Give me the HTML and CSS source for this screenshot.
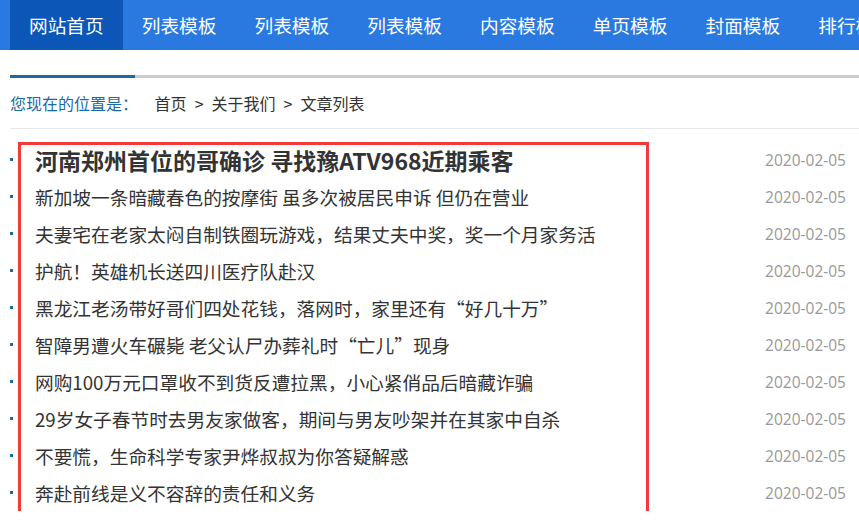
FILE: index.html
```html
<!DOCTYPE html>
<html lang="zh-CN">
<head>
    <meta charset="UTF-8">
    <meta name="viewport" content="width=device-width, initial-scale=1.0">
    <title>文章列表</title>
    <link rel="stylesheet" href="styles.css">
</head>
<body>

    <div class="nav">
        <a href="#" class="active">网站首页</a>
        <a href="#">列表模板</a>
        <a href="#">列表模板</a>
        <a href="#">列表模板</a>
        <a href="#">内容模板</a>
        <a href="#">单页模板</a>
        <a href="#">封面模板</a>
        <a href="#">排行模板</a>
    </div>

    <div class="main">
        <div class="title-bar"><span></span></div>

        <div class="place">
            <span class="place-label">您现在的位置是：</span>
            <a href="#">首页</a><span class="sep">&gt;</span><a href="#">关于我们</a><span class="sep">&gt;</span><a href="#">文章列表</a>
        </div>

        <div class="news-wrap">
            <ul class="news-list">
                <li class="top"><a href="#">河南郑州首位的哥确诊 寻找豫ATV968近期乘客</a><span class="date">2020-02-05</span></li>
                <li><a href="#">新加坡一条暗藏春色的按摩街 虽多次被居民申诉 但仍在营业</a><span class="date">2020-02-05</span></li>
                <li><a href="#">夫妻宅在老家太闷自制铁圈玩游戏，结果丈夫中奖，奖一个月家务活</a><span class="date">2020-02-05</span></li>
                <li><a href="#">护航！英雄机长送四川医疗队赴汉</a><span class="date">2020-02-05</span></li>
                <li><a href="#">黑龙江老汤带好哥们四处花钱，落网时，家里还有“好几十万”</a><span class="date">2020-02-05</span></li>
                <li><a href="#">智障男遭火车碾毙 老父认尸办葬礼时“亡儿”现身</a><span class="date">2020-02-05</span></li>
                <li><a href="#">网购100万元口罩收不到货反遭拉黑，小心紧俏品后暗藏诈骗</a><span class="date">2020-02-05</span></li>
                <li><a href="#">29岁女子春节时去男友家做客，期间与男友吵架并在其家中自杀</a><span class="date">2020-02-05</span></li>
                <li><a href="#">不要慌，生命科学专家尹烨叔叔为你答疑解惑</a><span class="date">2020-02-05</span></li>
                <li><a href="#">奔赴前线是义不容辞的责任和义务</a><span class="date">2020-02-05</span></li>
            </ul>
            <div class="mark"></div>
        </div>
    </div>

</body>
</html>
```

FILE: styles.css
```css
/* CSS Reset */
* {
    box-sizing: border-box;
    margin: 0;
    padding: 0;
}

body {
    font-family: "Noto Sans CJK SC", "Microsoft YaHei", sans-serif;
    color: #333;
    background: #fff;
    overflow: hidden;
}

a {
    color: #333;
    text-decoration: none;
}

/* 导航 */
.nav {
    display: flex;
    height: 50px;
    padding-left: 10px;
    background-color: #2979e1;
    white-space: nowrap;
    overflow: hidden;
}

.nav a {
    display: block;
    padding: 0 19px;
    line-height: 50px;
    font-size: 18.7px;
    color: #fff;
    flex-shrink: 0;
}

.nav a.active {
    background-color: #0b56b6;
}

.main {
    padding-left: 10px;
}

.title-bar {
    margin-top: 25px;
    height: 3px;
    background-color: #ccc;
}

.title-bar span {
    display: block;
    width: 125px;
    height: 3px;
    background-color: #1b6aa5;
}

/* 当前位置 */
.place {
    height: 51px;
    line-height: 50px;
    font-size: 16px;
    border-bottom: 1px solid #e8e8e8;
}

.place-label {
    color: #1b6aa5;
    margin-right: 13px;
}

.place .sep {
    margin: 0 8px;
    color: #333;
}

/* 文章列表 */
.news-wrap {
    position: relative;
    padding: 12px 13px 0 0;
}

.news-list {
    list-style: none;
}

.news-list li {
    display: flex;
    align-items: center;
    height: 37px;
}

.news-list li::before {
    content: "";
    width: 3px;
    height: 3px;
    margin-right: 22px;
    background-color: #1b6aa5;
    flex-shrink: 0;
}

.news-list li a {
    flex: 1;
    font-size: 18.7px;
    white-space: nowrap;
    overflow: hidden;
}

.news-list li.top a {
    font-size: 23px;
    font-weight: bold;
}

.news-list .date {
    font-family: "Open Sans", sans-serif;
    font-size: 15.5px;
    color: #999;
}

/* 红框标注 */
.mark {
    position: absolute;
    left: 8px;
    top: 13px;
    width: 631px;
    height: 379px;
    border: 3px solid #f33a3a;
    pointer-events: none;
}
```
